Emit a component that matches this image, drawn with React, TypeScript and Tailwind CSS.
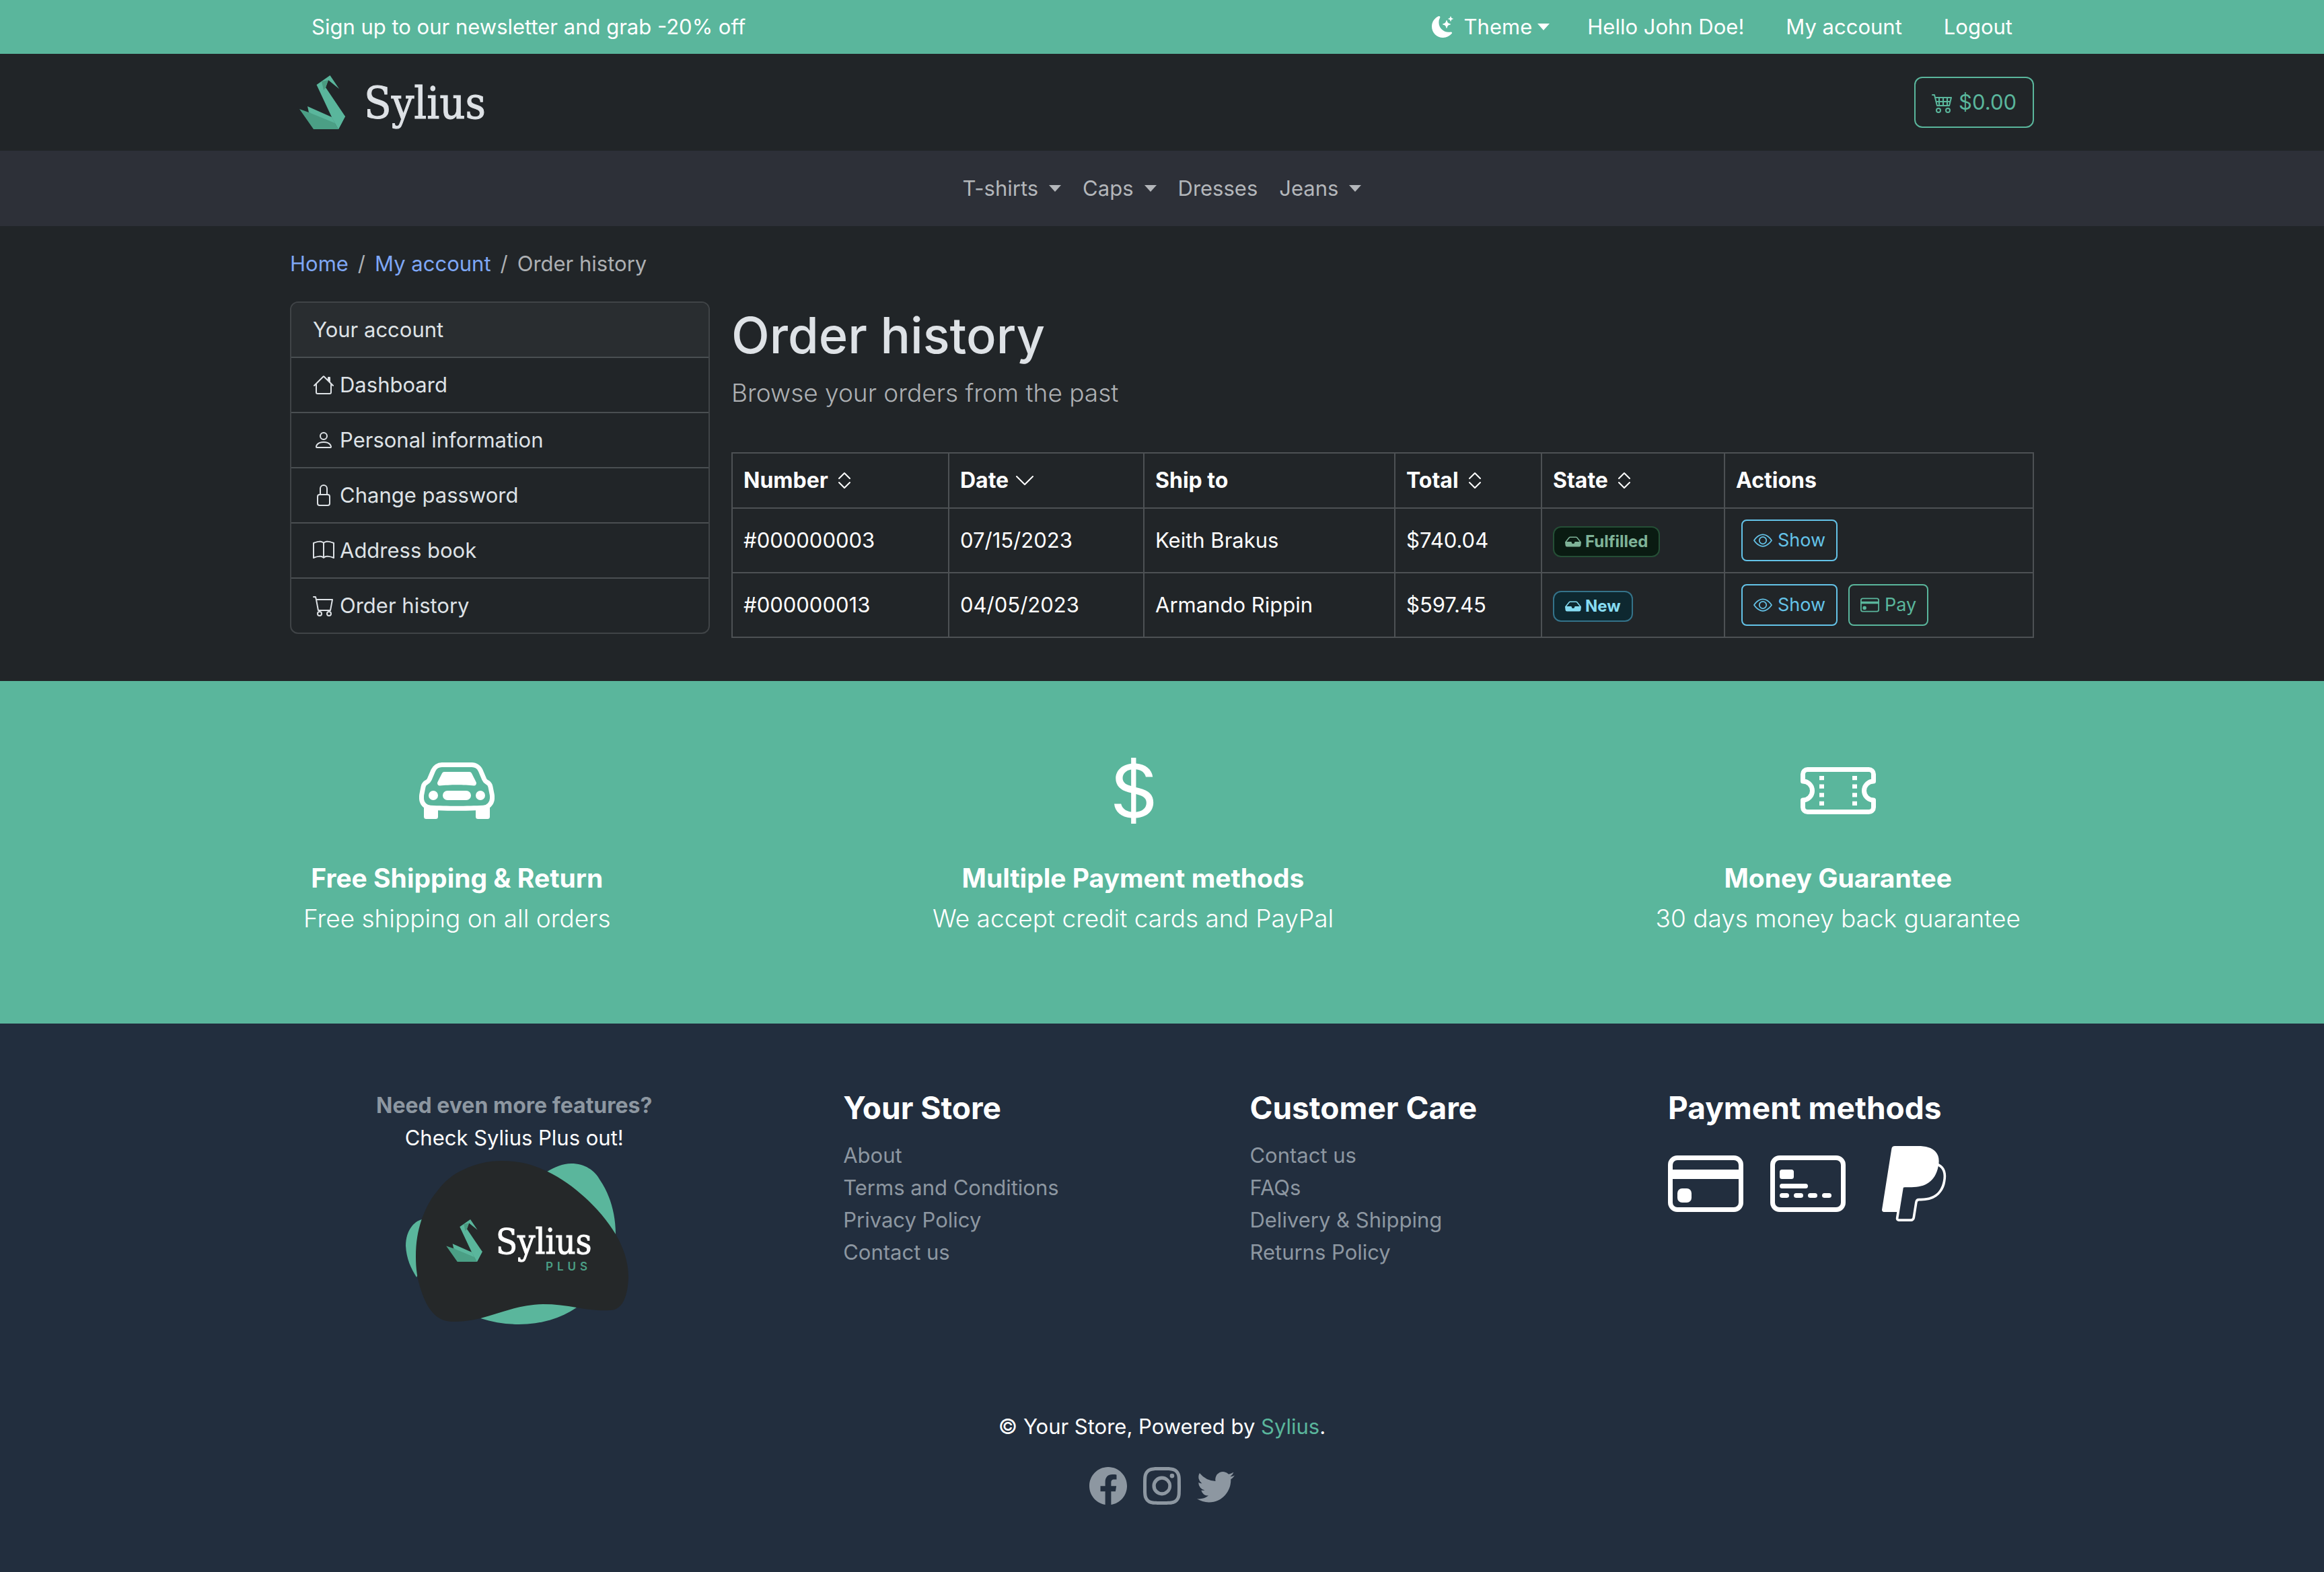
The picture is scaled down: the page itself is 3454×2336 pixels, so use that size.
import type { ReactNode } from "react";
import {
  BsBook,
  BsCarFront,
  BsCart,
  BsCart4,
  BsChevronDown,
  BsChevronExpand,
  BsCreditCard,
  BsCreditCard2Front,
  BsCurrencyDollar,
  BsEye,
  BsFacebook,
  BsHouse,
  BsInboxFill,
  BsInstagram,
  BsLock,
  BsMoonStarsFill,
  BsPaypal,
  BsPerson,
  BsTicketPerforated,
  BsTwitter,
} from "react-icons/bs";

function Caret() {
  return (
    <svg viewBox="0 0 18 10" className="h-[10px] w-[18px]" fill="currentColor" aria-hidden="true">
      <path d="M0 0h18L9 10z" />
    </svg>
  );
}

function SwanShapes() {
  return (
    <g>
      <path d="M25.5 14 45.5 0 59 20 43 7 39 18 68 61 58 80 48 62z" fill="#5ab69c" />
      <path d="M33 9 43 7 39 18 36 22z" fill="#4a9a80" />
      <path d="M0 50 14 55 48 62 58 80H21z" fill="#4b9f85" />
      <path d="M12 46 48 62 53 71 14 55z" fill="#5ab69c" />
      <path d="M48 62 58 80 68 61 56 50z" fill="#5ab69c" />
    </g>
  );
}

function Logo() {
  return (
    <a href="#home" className="flex items-center gap-7 pl-[14px]" aria-label="Sylius">
      <svg viewBox="0 0 68 80" className="h-20 w-[68px]" aria-hidden="true">
        <SwanShapes />
      </svg>
      <span className="pt-1 font-['DejaVu_Serif_Condensed','DejaVu_Serif',serif] text-[66px] leading-[80px] text-[#dee2e6] [-webkit-text-stroke:1px_#dee2e6]">
        Sylius
      </span>
    </a>
  );
}

function PlusBadge() {
  return (
    <svg viewBox="0 0 331 243" className="ml-2 h-[243px] w-[331px]" role="img" aria-label="Sylius Plus">
      <path d="M210 16C222 9 233 4 246 4C266 4 281 14 289 29C302 48 312 76 312 109L250 90z" fill="#5ab69c" />
      <path d="M24 87C12 90 0 104 0 126C1 146 8 160 16 173L40 130z" fill="#5ab69c" />
      <path d="M111 234C130 240 149 243 168 243C202 243 230 234 254 218L200 190z" fill="#5ab69c" />
      <path
        d="M143 0C170 0 190 6 211 16C250 35 290 72 312 109C324 130 331 150 331 173C330 205 320 222 304 222C285 223 272 221 254 218C238 215 222 213 204 213C165 214 140 227 111 234C95 238 82 239 68 239C45 238 32 220 23 193C17 175 15 160 15 143C15 120 18 105 23 89C30 70 36 58 46 46C58 30 70 20 86 13C105 4 122 0 143 0Z"
        fill="#252829"
      />
      <svg x="60" y="87" width="54" height="63" viewBox="0 0 68 80">
        <SwanShapes />
      </svg>
      <text
        x="134"
        y="138"
        className="font-['DejaVu_Serif_Condensed','DejaVu_Serif',serif] text-[52px]"
        fill="#ffffff"
        stroke="#ffffff"
      >
        Sylius
      </text>
      <text x="208" y="163" className="font-['Inter',sans-serif] text-[17px] font-semibold tracking-[6px]" fill="#4b9f85">
        PLUS
      </text>
    </svg>
  );
}

function TopBar() {
  return (
    <div className="bg-[#5ab69c] text-white">
      <div className="mx-auto flex h-20 max-w-[2592px] items-center justify-between px-8">
        <span>Sign up to our newsletter and grab -20% off</span>
        <nav className="flex items-center gap-14">
          <button type="button" className="flex items-center">
            <BsMoonStarsFill className="mr-4 size-8" />
            Theme
            <span className="ml-2">
              <Caret />
            </span>
          </button>
          <div className="flex gap-[62px]">
            <a href="#hello">Hello John Doe!</a>
            <a href="#account">My account</a>
            <a href="#logout">Logout</a>
          </div>
        </nav>
      </div>
    </div>
  );
}

function Header() {
  return (
    <header className="mx-auto flex h-36 w-full max-w-[2592px] items-center justify-between">
      <Logo />
      <button
        type="button"
        className="flex h-[76px] items-center gap-2 rounded-xl border-2 border-[#5ab69c] px-6 text-[#5ab69c]"
      >
        <BsCart4 className="size-8" />
        $0.00
      </button>
    </header>
  );
}

const categories = [
  { name: "T-shirts", menu: true },
  { name: "Caps", menu: true },
  { name: "Dresses", menu: false },
  { name: "Jeans", menu: true },
];

function CategoryNav() {
  return (
    <nav className="flex h-28 items-center justify-center gap-8 bg-[#2d3038] text-[#b3b6ba]">
      {categories.map((c) =>
        c.menu ? (
          <button key={c.name} type="button" className="flex items-center gap-4">
            {c.name}
            <Caret />
          </button>
        ) : (
          <a key={c.name} href="#category">
            {c.name}
          </a>
        ),
      )}
    </nav>
  );
}

const accountLinks = [
  { name: "Dashboard", icon: BsHouse },
  { name: "Personal information", icon: BsPerson },
  { name: "Change password", icon: BsLock },
  { name: "Address book", icon: BsBook },
  { name: "Order history", icon: BsCart },
];

function Sidebar() {
  return (
    <aside className="w-[624px] shrink-0 self-start overflow-hidden rounded-xl border-2 border-[#404447] text-[#dee2e6]">
      <div className="bg-[#292d30] px-8 py-4">Your account</div>
      {accountLinks.map(({ name, icon: Icon }) => (
        <a key={name} href="#account" className="flex items-center gap-2 border-t-2 border-[#4a4f52] px-8 py-4">
          <Icon className="size-8" />
          {name}
        </a>
      ))}
    </aside>
  );
}

function Badge({ tone, children }: { tone: "success" | "info"; children: ReactNode }) {
  const colors =
    tone === "success"
      ? "border-[#254f36] bg-[#0a1b12] text-[#7fb398]"
      : "border-[#34738a] bg-[#0e2830] text-[#86dcf2]";
  return (
    <span
      className={`mt-1 flex h-[46px] w-fit items-center gap-1.5 rounded-xl border-2 px-4 text-[24px] leading-6 font-bold ${colors}`}
    >
      <BsInboxFill className="size-6" />
      {children}
    </span>
  );
}

function ActionButton({ tone, icon, children }: { tone: "info" | "primary"; icon: ReactNode; children: ReactNode }) {
  const colors = tone === "info" ? "border-[#64c3e8] text-[#64c3e8]" : "border-[#5ab69c] text-[#5ab69c]";
  return (
    <button
      type="button"
      className={`flex h-[62px] items-center gap-2 rounded-lg border-2 px-4 text-[27px] leading-10 ${colors}`}
    >
      {icon}
      {children}
    </button>
  );
}

const columns: { name: string; sort: "none" | "both" | "down"; width: string }[] = [
  { name: "Number", sort: "both", width: "w-[322px]" },
  { name: "Date", sort: "down", width: "w-[290px]" },
  { name: "Ship to", sort: "none", width: "w-[373px]" },
  { name: "Total", sort: "both", width: "w-[218px]" },
  { name: "State", sort: "both", width: "w-[272px]" },
  { name: "Actions", sort: "none", width: "w-auto" },
];

const orders: {
  number: string;
  date: string;
  shipTo: string;
  total: string;
  state: string;
  tone: "success" | "info";
  payable: boolean;
}[] = [
  { number: "#000000003", date: "07/15/2023", shipTo: "Keith Brakus", total: "$740.04", state: "Fulfilled", tone: "success", payable: false },
  { number: "#000000013", date: "04/05/2023", shipTo: "Armando Rippin", total: "$597.45", state: "New", tone: "info", payable: true },
];

const cell = "border-2 border-[#4d5154] px-4";

function OrdersTable() {
  return (
    <table className="w-full table-fixed border-collapse text-left text-white">
      <thead>
        <tr className="h-[82px] text-[32px]">
          {columns.map((c) => (
            <th key={c.name} scope="col" className={`${cell} ${c.width} font-bold`}>
              <span className="flex items-center gap-2">
                {c.name}
                {c.sort === "both" && <BsChevronExpand className="size-8" />}
                {c.sort === "down" && <BsChevronDown className="size-8" />}
              </span>
            </th>
          ))}
        </tr>
      </thead>
      <tbody>
        {orders.map((o) => (
          <tr key={o.number} className="h-24">
            <td className={cell}>{o.number}</td>
            <td className={cell}>{o.date}</td>
            <td className={cell}>{o.shipTo}</td>
            <td className={cell}>{o.total}</td>
            <td className={cell}>
              <Badge tone={o.tone}>{o.state}</Badge>
            </td>
            <td className={cell}>
              <div className="flex gap-4 pl-2">
                <ActionButton tone="info" icon={<BsEye className="size-7" />}>
                  Show
                </ActionButton>
                {o.payable && (
                  <ActionButton tone="primary" icon={<BsCreditCard className="size-7" />}>
                    Pay
                  </ActionButton>
                )}
              </div>
            </td>
          </tr>
        ))}
      </tbody>
    </table>
  );
}

function Perk({ icon, title, text }: { icon: ReactNode; title: string; text: string }) {
  return (
    <div className="flex flex-col items-center text-center leading-[60px]">
      {icon}
      <h2 className="mt-11 text-[39px] leading-[60px] font-bold">{title}</h2>
      <p className="text-[37px] leading-[60px] font-light">{text}</p>
    </div>
  );
}

function Perks() {
  return (
    <section className="bg-[#5ab69c] pt-[107px] pb-[126px] text-white">
      <div className="mx-auto flex max-w-[2592px] justify-between px-5">
        <Perk icon={<BsCarFront className="size-28" />} title="Free Shipping & Return" text="Free shipping on all orders" />
        <Perk
          icon={<BsCurrencyDollar className="size-28" />}
          title="Multiple Payment methods"
          text="We accept credit cards and PayPal"
        />
        <Perk icon={<BsTicketPerforated className="size-28" />} title="Money Guarantee" text="30 days money back guarantee" />
      </div>
    </section>
  );
}

function LinkColumn({ title, links }: { title: string; links: string[] }) {
  return (
    <div>
      <h3 className="mb-[18px] text-[46px] leading-[58px] font-bold text-white">{title}</h3>
      <ul>
        {links.map((l) => (
          <li key={l}>
            <a href="#page">{l}</a>
          </li>
        ))}
      </ul>
    </div>
  );
}

function Footer() {
  return (
    <footer className="flex grow flex-col bg-[#222e3e] pt-24 text-[#8d97a1]">
      <div className="mx-auto flex w-full max-w-[2592px] justify-between px-32">
        <div className="flex flex-col items-center pt-0.5">
          <strong className="text-[32px] font-bold">Need even more features?</strong>
          <a href="#plus" className="flex flex-col items-center gap-2.5 text-white">
            Check Sylius Plus out!
            <PlusBadge />
          </a>
        </div>
        <LinkColumn title="Your Store" links={["About", "Terms and Conditions", "Privacy Policy", "Contact us"]} />
        <LinkColumn title="Customer Care" links={["Contact us", "FAQs", "Delivery & Shipping", "Returns Policy"]} />
        <div className="text-white">
          <h3 className="mb-7 text-[46px] leading-[58px] font-bold">Payment methods</h3>
          <div className="flex gap-10">
            <BsCreditCard className="size-28" />
            <BsCreditCard2Front className="size-28" />
            <BsPaypal className="size-28" />
          </div>
        </div>
      </div>
      <p className="mt-32 text-center text-white">
        © Your Store, Powered by{" "}
        <a href="#sylius" className="text-[#5ab69c]">
          Sylius
        </a>
        .
      </p>
      <div className="mt-9 flex justify-center gap-6">
        <a href="#facebook" aria-label="Facebook">
          <BsFacebook className="size-14" />
        </a>
        <a href="#instagram" aria-label="Instagram">
          <BsInstagram className="size-14" />
        </a>
        <a href="#twitter" aria-label="Twitter">
          <BsTwitter className="size-14" />
        </a>
      </div>
    </footer>
  );
}

export default function App() {
  return (
    <div className="flex min-h-screen flex-col bg-[#212528] font-['Inter',sans-serif] text-[31px] leading-[48px] text-[#dee2e6]">
      <TopBar />
      <Header />
      <CategoryNav />
      <main className="mx-auto w-full max-w-[2592px] pt-8 pb-16">
        <nav aria-label="Breadcrumb" className="flex gap-[14px] text-[#adb0b3]">
          <a href="#home" className="text-[#7ea7f5]">
            Home
          </a>
          <span>/</span>
          <a href="#account" className="text-[#7ea7f5]">
            My account
          </a>
          <span>/</span>
          <span>Order history</span>
        </nav>
        <div className="mt-8 flex gap-8">
          <Sidebar />
          <div className="min-w-0 grow">
            <h1 className="text-[74px] leading-[100px] font-medium">Order history</h1>
            <p className="mt-[6px] mb-[58px] text-[37px] leading-[60px] font-light text-[#adb0b3]">Browse your orders from the past</p>
            <OrdersTable />
          </div>
        </div>
      </main>
      <Perks />
      <Footer />
    </div>
  );
}
